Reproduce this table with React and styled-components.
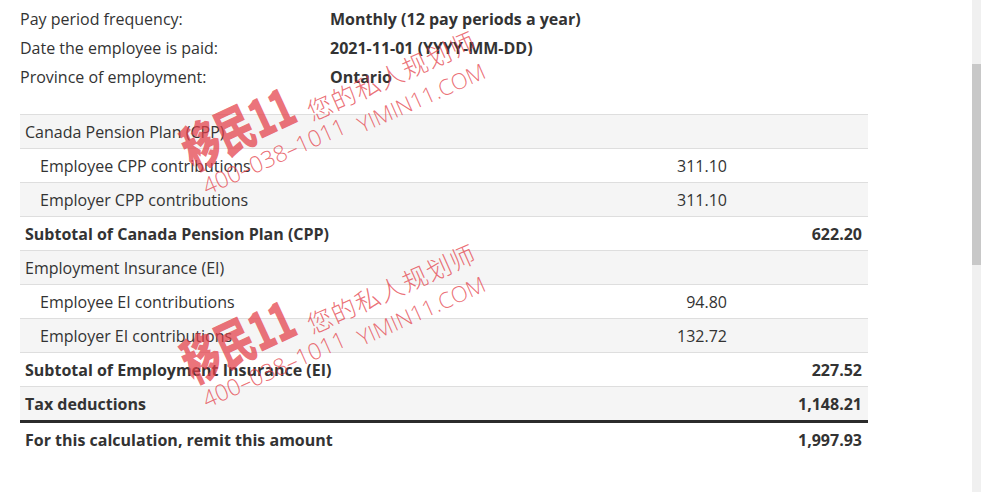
import styled, { createGlobalStyle } from "styled-components";

const GlobalStyle = createGlobalStyle`
  html, body {
    margin: 0;
    padding: 0;
    background: #fff;
    overflow: hidden;
  }
  body {
    font-family: "Open Sans", "Noto Sans", sans-serif;
    color: #333;
  }
`;

const Page = styled.div`
  display: flex;
  height: 100vh;
  position: relative;
  overflow: hidden;
`;

const Main = styled.div`
  flex: 1;
  padding: 5px 0 0 20px;
`;

const InfoList = styled.div`
  display: grid;
  grid-template-columns: 310px auto;
  font-size: 16px;
  line-height: 29px;
`;

const InfoLabel = styled.div`
  font-weight: 400;
`;

const InfoValue = styled.div`
  font-weight: 700;
`;

const Table = styled.table`
  margin-top: 22px;
  width: 848px;
  border-collapse: collapse;
  font-size: 16px;
`;

const Row = styled.tr`
  background: ${(p) => (p.$shade ? "#f5f5f5" : "#fff")};
  border-top: ${(p) => (p.$heavy ? "3px solid #2b2b2b" : "1px solid #dedede")};
  font-weight: ${(p) => (p.$bold ? 700 : 400)};
`;

const Cell = styled.td`
  height: 33px;
  padding: 0 6px 0 ${(p) => (p.$indent ? "20px" : "5px")};
  text-align: ${(p) => (p.$num ? "right" : "left")};
  width: ${(p) => p.$w || "auto"};
  white-space: nowrap;
  line-height: 22px;
`;

const ScrollTrack = styled.div`
  width: 9px;
  background: #f0f0f0;
  flex-shrink: 0;
`;

const ScrollThumb = styled.div`
  margin-top: 64px;
  height: 201px;
  background: #c8c8c8;
`;

const Mark = styled.div`
  position: absolute;
  left: ${(p) => p.$x}px;
  top: ${(p) => p.$y}px;
  transform: translate(-50%, -50%) rotate(${(p) => p.$r || -24}deg)
    scaleX(${(p) => p.$sx || 1});
  color: rgba(228, 62, 72, 0.74);
  font-family: ${(p) =>
    p.$cjk
      ? '"Noto Sans CJK SC", sans-serif'
      : '"Open Sans", "Noto Sans", sans-serif'};
  font-size: ${(p) => p.$size}px;
  font-weight: ${(p) => p.$weight || 300};
  letter-spacing: ${(p) => p.$ls || 0}px;
  white-space: nowrap;
  pointer-events: none;
  line-height: 1;
`;

const info = [
  ["Pay period frequency:", "Monthly (12 pay periods a year)"],
  ["Date the employee is paid:", "2021-11-01 (YYYY-MM-DD)"],
  ["Province of employment:", "Ontario"],
];

const rows = [
  { label: "Canada Pension Plan (CPP)", shade: true },
  { label: "Employee CPP contributions", indent: true, mid: "311.10" },
  { label: "Employer CPP contributions", indent: true, mid: "311.10", shade: true },
  { label: "Subtotal of Canada Pension Plan (CPP)", bold: true, end: "622.20" },
  { label: "Employment Insurance (EI)", shade: true },
  { label: "Employee EI contributions", indent: true, mid: "94.80" },
  { label: "Employer EI contributions", indent: true, mid: "132.72", shade: true },
  { label: "Subtotal of Employment Insurance (EI)", bold: true, end: "227.52" },
  { label: "Tax deductions", bold: true, end: "1,148.21", shade: true },
  { label: "For this calculation, remit this amount", bold: true, end: "1,997.93", heavy: true },
];

const Watermark = ({ dy }) => (
  <>
    <Mark $x={237} $y={126 + dy} $size={52} $weight={900} $cjk $r={-25} $sx={0.72} $ls={-1}>
      移民11
    </Mark>
    <Mark $x={391} $y={75 + dy} $size={25} $cjk $ls={1}>
      您的私人规划师
    </Mark>
    <Mark $x={274} $y={156 + dy} $size={23}>
      400–038–1011
    </Mark>
    <Mark $x={421} $y={97 + dy} $size={22}>
      YIMIN11.COM
    </Mark>
  </>
);

export default function App() {
  return (
    <>
      <GlobalStyle />
      <Page>
        <Main>
          <InfoList>
            {info.map(([k, v]) => (
              <>
                <InfoLabel key={k}>{k}</InfoLabel>
                <InfoValue key={v}>{v}</InfoValue>
              </>
            ))}
          </InfoList>
          <Table>
            <tbody>
              {rows.map((r) => (
                <Row key={r.label} $shade={r.shade} $bold={r.bold} $heavy={r.heavy}>
                  <Cell $indent={r.indent}>{r.label}</Cell>
                  <Cell $num $w="150px">{r.mid}</Cell>
                  <Cell $num $w="124px">{r.end}</Cell>
                </Row>
              ))}
            </tbody>
          </Table>
        </Main>
        <ScrollTrack>
          <ScrollThumb />
        </ScrollTrack>
        <Watermark dy={0} />
        <Watermark dy={213} />
      </Page>
    </>
  );
}
